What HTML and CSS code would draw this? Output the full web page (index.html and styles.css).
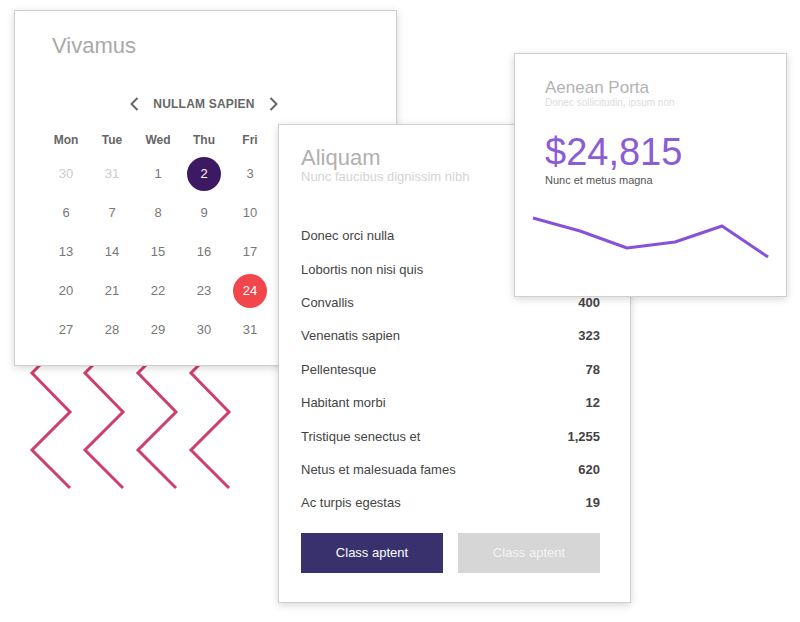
FILE: index.html
```html
<!DOCTYPE html>
<html lang="en">
<head>
<meta charset="utf-8">
<title>Dashboard widgets</title>
<link rel="stylesheet" href="styles.css">
</head>
<body>
<div class="canvas">
  <svg class="zigzags" width="260" height="200" viewBox="0 300 260 200">
    <g fill="none" stroke="#cf3f6c" stroke-width="3" stroke-linejoin="miter">
      <polyline points="70,335 32,373 70,412 32,450 70,488"/>
      <polyline points="123,335 85,373 123,412 85,450 123,488"/>
      <polyline points="176,335 138,373 176,412 138,450 176,488"/>
      <polyline points="229,335 191,373 229,412 191,450 229,488"/>
    </g>
  </svg>

  <section class="card calendar">
    <h2 class="cal-title">Vivamus</h2>
    <div class="cal-body">
      <div class="cal-nav">
        <svg class="chev" width="9" height="14" viewBox="0 0 9 14"><polyline points="7.5,1 1.5,7 7.5,13" fill="none" stroke="#666" stroke-width="2"/></svg>
        <span class="cal-month">NULLAM SAPIEN</span>
        <svg class="chev" width="9" height="14" viewBox="0 0 9 14"><polyline points="1.5,1 7.5,7 1.5,13" fill="none" stroke="#666" stroke-width="2"/></svg>
      </div>
      <div class="cal-grid">
        <div class="dow">Mon</div><div class="dow">Tue</div><div class="dow">Wed</div><div class="dow">Thu</div><div class="dow">Fri</div><div class="dow"></div><div class="dow"></div>
        <div class="day muted">30</div><div class="day muted">31</div><div class="day">1</div><div class="day"><span class="dot dot-sel">2</span></div><div class="day">3</div><div class="day"></div><div class="day"></div>
        <div class="day">6</div><div class="day">7</div><div class="day">8</div><div class="day">9</div><div class="day">10</div><div class="day"></div><div class="day"></div>
        <div class="day">13</div><div class="day">14</div><div class="day">15</div><div class="day">16</div><div class="day">17</div><div class="day"></div><div class="day"></div>
        <div class="day">20</div><div class="day">21</div><div class="day">22</div><div class="day">23</div><div class="day"><span class="dot dot-today">24</span></div><div class="day"></div><div class="day"></div>
        <div class="day">27</div><div class="day">28</div><div class="day">29</div><div class="day">30</div><div class="day">31</div><div class="day"></div><div class="day"></div>
      </div>
    </div>
  </section>

  <section class="card list-card">
    <h2 class="lc-title">Aliquam</h2>
    <p class="lc-sub">Nunc faucibus dignissim nibh</p>
    <ul class="lc-list">
      <li><span>Donec orci nulla</span><b>512</b></li>
      <li><span>Lobortis non nisi quis</span><b>1,024</b></li>
      <li><span>Convallis</span><b>400</b></li>
      <li><span>Venenatis sapien</span><b>323</b></li>
      <li><span>Pellentesque</span><b>78</b></li>
      <li><span>Habitant morbi</span><b>12</b></li>
      <li><span>Tristique senectus et</span><b>1,255</b></li>
      <li><span>Netus et malesuada fames</span><b>620</b></li>
      <li><span>Ac turpis egestas</span><b>19</b></li>
    </ul>
    <div class="lc-actions">
      <button class="btn btn-primary">Class aptent</button>
      <button class="btn btn-disabled">Class aptent</button>
    </div>
  </section>

  <section class="card stat-card">
    <div class="stat-head">
      <h2 class="st-title">Aenean Porta</h2>
      <p class="st-sub">Donec sollicitudin, ipsum non</p>
      <div class="st-value">$24,815</div>
      <p class="st-caption">Nunc et metus magna</p>
    </div>
    <svg class="st-chart" width="271" height="70" viewBox="0 0 271 70">
      <polyline points="18,19 65,32 112,49 160,43 207,27 253,58" fill="none" stroke="#8752d9" stroke-width="3" stroke-linejoin="round"/>
    </svg>
  </section>
</div>
</body>
</html>
```
FILE: styles.css
```css
* { box-sizing: border-box; }
html, body { margin: 0; padding: 0; background: #fff; }
body {
  font-family: "Liberation Sans", Arial, sans-serif;
  width: 800px;
  height: 622px;
  overflow: hidden;
}
h2, p, ul { margin: 0; padding: 0; }
ul { list-style: none; }

.canvas { position: relative; width: 800px; height: 622px; }

.card {
  position: absolute;
  background: #fff;
  border: 1px solid #cfcfcf;
  box-shadow: 0 2px 8px rgba(0, 0, 0, 0.16);
}

.zigzags { position: absolute; left: 0; top: 300px; z-index: 0; }

/* Calendar */
.calendar {
  left: 14px; top: 10px; width: 383px; height: 356px;
  padding: 22px 0 0 28px;
  z-index: 1;
}
.cal-title {
  font-weight: normal;
  font-size: 22px;
  line-height: 26px;
  color: #a9a9a9;
  padding-left: 9px;
}
.cal-body { width: 322px; margin-top: 34px; }
.cal-nav {
  height: 21px;
  display: flex; align-items: center; justify-content: center;
  gap: 14px;
}
.cal-month { font-size: 12px; font-weight: bold; color: #666; letter-spacing: 0.2px; }
.chev { display: block; }
.cal-grid {
  margin-top: 11px;
  display: grid;
  grid-template-columns: repeat(7, 46px);
  grid-template-rows: 29px repeat(5, 39px);
}
.dow, .day { display: flex; align-items: center; justify-content: center; }
.dow { font-size: 12px; font-weight: bold; color: #666; }
.day { font-size: 13px; color: #777; }
.day.muted { color: #ccc; }
.dot {
  width: 34px; height: 34px; border-radius: 50%;
  display: flex; align-items: center; justify-content: center;
  color: #fff;
}
.dot-sel { background: #3e1963; }
.dot-today { background: #f1464c; }

/* List card */
.list-card {
  left: 278px; top: 124px; width: 353px; height: 479px;
  padding: 21px 30px 0 22px;
  z-index: 2;
}
.lc-title { font-weight: normal; font-size: 22px; line-height: 24px; color: #b0b0b0; }
.lc-sub { margin-top: -1px; font-size: 13px; line-height: 16px; color: #d4d4d4; }
.lc-list { margin-top: 34px; }
.lc-list li {
  height: 33.4px;
  display: flex; align-items: center; justify-content: space-between;
  font-size: 13px; color: #444;
}
.lc-list b { color: #444; }
.lc-actions { margin-top: 13px; display: flex; gap: 15px; }
.btn {
  width: 142px; height: 40px;
  border: 0; border-radius: 0;
  font-family: inherit; font-size: 13px;
  color: #fff;
}
.btn-primary { background: #38316e; }
.btn-disabled { background: #d6d6d6; color: #f4f4f4; }

/* Stat card */
.stat-card {
  left: 514px; top: 53px; width: 273px; height: 244px;
  z-index: 3;
}
.stat-head { padding: 25px 0 0 30px; }
.st-title { font-weight: normal; font-size: 17px; line-height: 18px; color: #b3b3b3; }
.st-sub { font-size: 10px; line-height: 12px; color: #dcdcdc; }
.st-value { margin-top: 22px; font-size: 38px; line-height: 42px; color: #8a5cd7; }
.st-caption { margin-top: 1px; font-size: 11px; line-height: 13px; color: #555; }
.st-chart { display: block; margin-top: 12px; }
```
